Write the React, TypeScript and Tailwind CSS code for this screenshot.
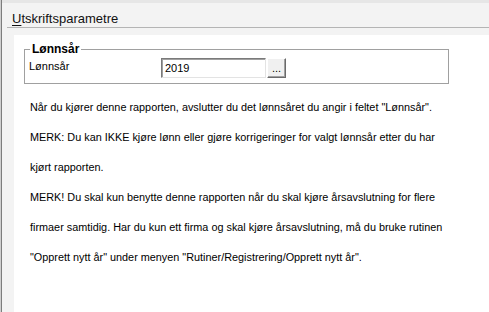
import React from 'react';

const lines = [
  'Når du kjører denne rapporten, avslutter du det lønnsåret du angir i feltet "Lønnsår".',
  'MERK: Du kan IKKE kjøre lønn eller gjøre korrigeringer for valgt lønnsår etter du har',
  'kjørt rapporten.',
  'MERK! Du skal kun benytte denne rapporten når du skal kjøre årsavslutning for flere',
  'firmaer samtidig. Har du kun ett firma og skal kjøre årsavslutning, må du bruke rutinen',
  '"Opprett nytt år" under menyen "Rutiner/Registrering/Opprett nytt år".',
];

export default function App() {
  return (
    <div className="w-[489px] h-[312px] overflow-hidden flex bg-[#f3f3f3] font-['Liberation_Sans',Arial,sans-serif] text-black">
      {/* venstre kant */}
      <div className="w-px bg-[#cfcfcf]" />
      <div className="w-px bg-[#7d7d7d]" />

      <div className="flex-1 flex flex-col">
        <div className="h-[3px] bg-[#e6e6e6]" />
        <div className="h-[24px] pl-[10px] pt-[8px] text-[13px] leading-[15px] text-[#111]">
          <span className="underline underline-offset-2">U</span>tskriftsparametre
        </div>
        <div className="h-px ml-[5px] bg-[#b4b4b4]" />
        <div className="h-[7px]" />

        {/* innhold */}
        <div className="flex-1 ml-[12px] bg-white pt-[14px]">
          <div className="relative ml-[10px] w-[425px] border border-[#a0a0a0]">
            <span className="absolute left-[5px] top-[-8px] bg-white px-[2px] text-[12px] font-bold leading-[14px]">
              Lønnsår
            </span>
            <div className="flex items-start pl-[4px] pt-[8px] pb-[5px]">
              <div className="w-[132px] mt-[2px] text-[11px] leading-[13px]">Lønnsår</div>
              <div className="w-[105px] h-[20px] border-t border-l border-[#7a7a7a] border-b border-r border-b-[#e3e3e3] border-r-[#e3e3e3] shadow-[inset_1px_1px_0_#a0a0a0] pl-[3px] text-[11px] leading-[18px]">
                2019
              </div>
              <button className="ml-[1px] w-[19px] h-[20px] bg-[#f0f0f0] border border-t-white border-l-white border-b-[#6a6a6a] border-r-[#6a6a6a] shadow-[inset_-1px_-1px_0_#a0a0a0] text-[11px] leading-[16px] text-center">
                ...
              </button>
            </div>
          </div>

          <div className="mt-[8px] pl-[16px] flex flex-col text-[10.85px]">
            {lines.map((t, i) => (
              <div key={i} className="h-[30px] leading-[30px] whitespace-nowrap">
                {t}
              </div>
            ))}
          </div>
        </div>
      </div>
    </div>
  );
}
